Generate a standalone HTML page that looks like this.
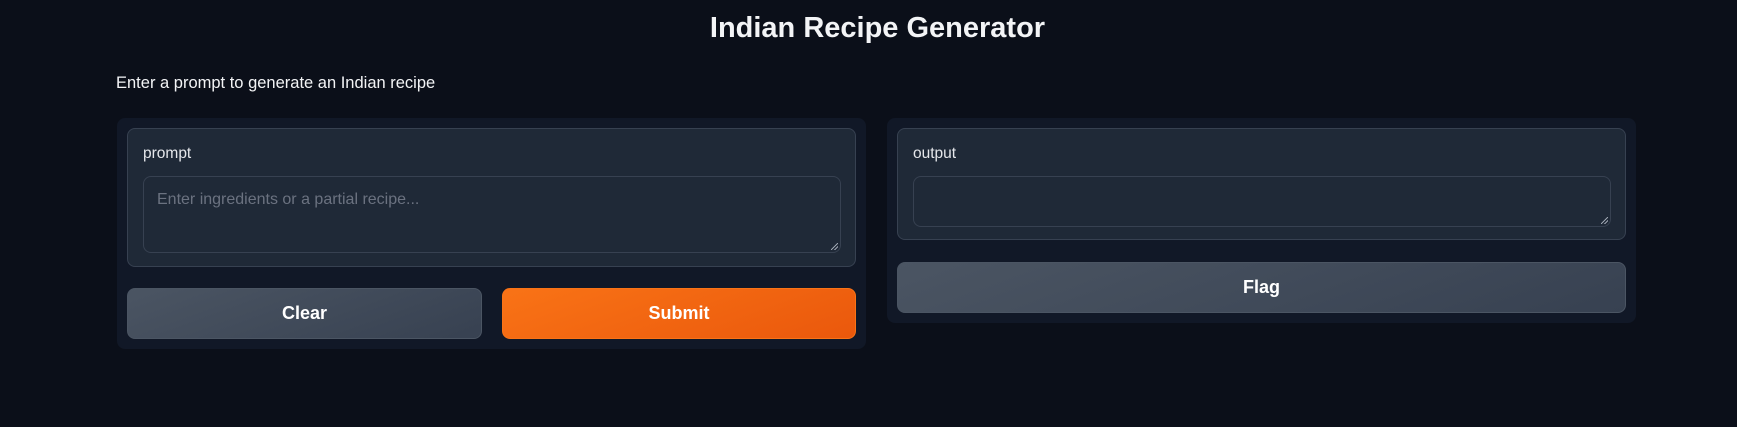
<!DOCTYPE html>
<html><head><style>
*{box-sizing:border-box;margin:0;padding:0}
body{width:1737px;height:427px;background:#0b0f19;font-family:"Liberation Sans",sans-serif;color:#e5e7eb;position:relative;overflow:hidden}
.a{position:absolute}
h1{position:absolute;top:12px;left:9px;width:1737px;text-align:center;font-size:29px;font-weight:bold;color:#f3f4f6}
.desc{left:116px;top:74px;font-size:16.5px;color:#f3f4f6}
.panel{background:#111827;border-radius:8px}
.box{background:#1f2937;border:1px solid #374151;border-radius:8px}
.ta{background:#1f2937;border:1px solid #374151;border-radius:8px}
.lbl{font-size:15.5px;color:#e5e7eb}
.btn{border-radius:8px;display:flex;align-items:center;justify-content:center;font-weight:bold;font-size:18px;color:#fff}
.sec{background:linear-gradient(160deg,#4b5563,#374151);border:1px solid #4b5563}
.pri{background:linear-gradient(160deg,#f97316,#ea580c);border:1px solid #f97316}
.grip{position:absolute;right:2px;bottom:2px;width:7px;height:7px;background:linear-gradient(135deg,transparent 45%,#9ca3af 45%,#9ca3af 55%,transparent 55%,transparent 70%,#9ca3af 70%,#9ca3af 80%,transparent 80%)}
</style></head><body>
<h1>Indian Recipe Generator</h1>
<div class="a desc">Enter a prompt to generate an Indian recipe</div>

<div class="a panel" style="left:117px;top:118px;width:749px;height:231px"></div>
<div class="a box" style="left:127px;top:128px;width:729px;height:139px"></div>
<div class="a lbl" style="left:143px;top:145px">prompt</div>
<div class="a ta" style="left:143px;top:176px;width:698px;height:77px"><div class="grip"></div></div>
<div class="a" style="left:157px;top:191px;font-size:16px;color:#6b7280">Enter ingredients or a partial recipe...</div>
<div class="a btn sec" style="left:127px;top:288px;width:355px;height:51px">Clear</div>
<div class="a btn pri" style="left:502px;top:288px;width:354px;height:51px">Submit</div>

<div class="a panel" style="left:887px;top:118px;width:749px;height:205px"></div>
<div class="a box" style="left:897px;top:128px;width:729px;height:112px"></div>
<div class="a lbl" style="left:913px;top:145px">output</div>
<div class="a ta" style="left:913px;top:176px;width:698px;height:51px"><div class="grip"></div></div>
<div class="a btn sec" style="left:897px;top:262px;width:729px;height:51px">Flag</div>
</body></html>
